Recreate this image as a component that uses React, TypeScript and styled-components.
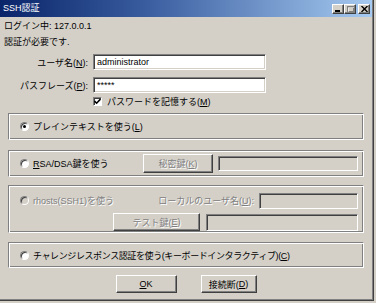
import styled, { createGlobalStyle } from 'styled-components'

const GlobalStyle = createGlobalStyle`
  html, body {
    margin: 0;
    padding: 0;
    background: #d4d0c8;
  }
  body {
    font-family: "Liberation Sans", "Noto Sans CJK JP", sans-serif;
    font-size: 9px;
    color: #000;
  }
  u {
    text-underline-offset: 1px;
  }
`

const Window = styled.div`
  width: 374px;
  height: 301px;
  box-sizing: border-box;
  background: #d4d0c8;
  border-right: 1px solid #404040;
  border-bottom: 1px solid #404040;
  box-shadow: inset -1px -1px 0 #808080;
  display: flex;
  flex-direction: column;
`

const TitleBar = styled.div`
  height: 17px;
  flex: none;
  display: flex;
  align-items: center;
  padding: 0 2px 0 3px;
  margin-right: 1px;
  background: linear-gradient(90deg, #0a246a 0%, #3a5ea0 40%, #a6caf0 100%);
  color: #fff;
`

const Title = styled.span`
  flex: 1;
  font-size: 9px;
  line-height: 17px;
`

const CaptionButtons = styled.div`
  display: flex;
  align-items: center;
`

const CaptionButton = styled.div<{ $gap?: number }>`
  width: 12px;
  height: 10px;
  margin-left: ${({ $gap }) => $gap ?? 0}px;
  box-sizing: border-box;
  background: #d4d0c8;
  border: 1px solid;
  border-color: #fff #404040 #404040 #fff;
  box-shadow: inset -1px -1px 0 #808080;
  display: flex;
  align-items: center;
  justify-content: center;
`

const Body = styled.div`
  padding-top: 3px;
  display: flex;
  flex-direction: column;
`

const InfoLine = styled.div<{ $top?: number }>`
  margin: ${({ $top }) => $top ?? 0}px 0 0 4px;
  height: 12px;
  line-height: 12px;
`

const FieldRow = styled.div<{ $top: number }>`
  display: flex;
  align-items: center;
  gap: 5px;
  height: 16px;
  margin-top: ${({ $top }) => $top}px;
`

const RowLabel = styled.div`
  width: 88px;
  text-align: right;
  white-space: nowrap;
`

const Field = styled.div<{ $width?: number; $height?: number; $disabled?: boolean }>`
  ${({ $width }) => ($width ? `width: ${$width}px;` : 'flex: 1;')}
  height: ${({ $height }) => $height ?? 16}px;
  box-sizing: border-box;
  background: ${({ $disabled }) => ($disabled ? '#d4d0c8' : '#fff')};
  border: 1px solid;
  border-color: #808080 #fff #fff #808080;
  box-shadow: inset 1px 1px 0 #404040, inset -1px -1px 0 #d4d0c8;
  padding: 0 3px;
  display: flex;
  align-items: center;
  white-space: nowrap;
  overflow: hidden;
`

const CheckRow = styled.div`
  display: flex;
  align-items: center;
  gap: 5px;
  height: 12px;
  margin-top: 2px;
  padding-left: 93px;
`

const CheckBox = styled.div`
  width: 9px;
  height: 9px;
  box-sizing: border-box;
  background: #fff;
  border: 1px solid;
  border-color: #808080 #fff #fff #808080;
  box-shadow: inset 1px 1px 0 #404040;
  display: flex;
  align-items: center;
  justify-content: center;
`

const Group = styled.div<{ $top: number; $height: number; $column?: boolean }>`
  margin: ${({ $top }) => $top}px 0 0 8px;
  width: 356px;
  height: ${({ $height }) => $height}px;
  box-sizing: border-box;
  border-top: 1px solid #808080;
  border-left: 1px solid #808080;
  border-right: 1px solid #fff;
  border-bottom: 1px solid #fff;
  box-shadow: inset 1px 1px 0 #fff, inset -1px -1px 0 #808080;
  padding: ${({ $column }) => ($column ? '6px 5px 0 11px' : '0 5px 0 11px')};
  display: flex;
  flex-direction: ${({ $column }) => ($column ? 'column' : 'row')};
  align-items: ${({ $column }) => ($column ? 'stretch' : 'center')};
`

const GroupRow = styled.div<{ $height: number; $top?: number }>`
  display: flex;
  align-items: center;
  height: ${({ $height }) => $height}px;
  margin-top: ${({ $top }) => $top ?? 0}px;
`

const RadioLabel = styled.div<{ $width?: number; $disabled?: boolean; $tight?: boolean }>`
  display: flex;
  align-items: center;
  gap: 4px;
  white-space: nowrap;
  ${({ $width }) => ($width ? `width: ${$width}px; flex: none;` : 'flex: 1;')}
  color: ${({ $disabled }) => ($disabled ? '#808080' : '#000')};
  text-shadow: ${({ $disabled }) => ($disabled ? '1px 1px 0 #fff' : 'none')};
  letter-spacing: ${({ $tight }) => ($tight ? '-0.4px' : 'normal')};
`

const Radio = styled.div<{ $checked?: boolean; $disabled?: boolean }>`
  width: 9px;
  height: 9px;
  flex: none;
  box-sizing: border-box;
  border-radius: 50%;
  background: ${({ $disabled }) => ($disabled ? '#d4d0c8' : '#fff')};
  border: 1px solid;
  border-color: #808080 #fff #fff #808080;
  box-shadow: inset 1px 1px 0 #404040;
  display: flex;
  align-items: center;
  justify-content: center;

  &::after {
    content: '';
    display: ${({ $checked }) => ($checked ? 'block' : 'none')};
    width: 3px;
    height: 3px;
    border-radius: 50%;
    background: #000;
  }
`

const DimText = styled.span`
  color: #808080;
  text-shadow: 1px 1px 0 #fff;
  white-space: nowrap;
`

const Button = styled.div<{ $width: number; $height?: number; $disabled?: boolean; $left?: number }>`
  width: ${({ $width }) => $width}px;
  height: ${({ $height }) => $height ?? 18}px;
  flex: none;
  margin-left: ${({ $left }) => $left ?? 0}px;
  box-sizing: border-box;
  background: #d4d0c8;
  border: 1px solid;
  border-color: #fff #404040 #404040 #fff;
  box-shadow: inset -1px -1px 0 #808080;
  display: flex;
  align-items: center;
  justify-content: center;
  white-space: nowrap;
  color: ${({ $disabled }) => ($disabled ? '#808080' : '#000')};
  text-shadow: ${({ $disabled }) => ($disabled ? '1px 1px 0 #fff' : 'none')};
`

const ButtonRow = styled.div`
  display: flex;
  justify-content: center;
  gap: 24px;
  margin-top: 7px;
  padding-right: 1px;
`

export default function App() {
  return (
    <>
      <GlobalStyle />
      <Window>
        <TitleBar>
          <Title>SSH認証</Title>
          <CaptionButtons>
            <CaptionButton>
              <svg width="6" height="6" viewBox="0 0 6 6">
                <rect x="0" y="4" width="5" height="2" fill="#000" />
              </svg>
            </CaptionButton>
            <CaptionButton>
              <svg width="7" height="6" viewBox="0 0 7 6">
                <rect x="0.5" y="0.5" width="6" height="5" fill="none" stroke="#808080" />
                <rect x="0" y="0" width="7" height="2" fill="#808080" />
                <rect x="1.5" y="1.5" width="6" height="5" fill="none" stroke="#fff" opacity="0.6" />
              </svg>
            </CaptionButton>
            <CaptionButton $gap={2}>
              <svg width="7" height="6" viewBox="0 0 7 6">
                <path d="M0.5 0 L6.5 6 M6.5 0 L0.5 6" stroke="#000" strokeWidth="1.4" />
              </svg>
            </CaptionButton>
          </CaptionButtons>
        </TitleBar>
        <Body>
          <InfoLine>ログイン中: 127.0.0.1</InfoLine>
          <InfoLine $top={4}>認証が必要です.</InfoLine>

          <FieldRow $top={6}>
            <RowLabel>ユーザ名(<u>N</u>):</RowLabel>
            <Field $width={173}>administrator</Field>
          </FieldRow>
          <FieldRow $top={7}>
            <RowLabel>パスフレーズ(<u>P</u>):</RowLabel>
            <Field $width={173}>*****</Field>
          </FieldRow>
          <CheckRow>
            <CheckBox>
              <svg width="7" height="7" viewBox="0 0 7 7">
                <path d="M0.5 3 L2.6 5.2 L6.5 1" fill="none" stroke="#000" strokeWidth="1.6" />
              </svg>
            </CheckBox>
            <span>パスワードを記憶する(<u>M</u>)</span>
          </CheckRow>

          <Group $top={6} $height={27}>
            <RadioLabel>
              <Radio $checked />
              <span>プレインテキストを使う(<u>L</u>)</span>
            </RadioLabel>
          </Group>

          <Group $top={10} $height={27}>
            <RadioLabel $width={123}>
              <Radio />
              <span><u>R</u>SA/DSA鍵を使う</span>
            </RadioLabel>
            <Button $width={70} $height={19} $disabled>
              秘密鍵(<u>K</u>)
            </Button>
            <Field $height={15} $disabled style={{ marginLeft: 5 }} />
          </Group>

          <Group $top={8} $height={48} $column>
            <GroupRow $height={17}>
              <RadioLabel $disabled>
                <Radio $disabled />
                <span>rhosts(SSH1)を使う</span>
              </RadioLabel>
              <DimText>
                ローカルのユーザ名(<u>U</u>):
              </DimText>
              <Field $width={99} $height={16} $disabled style={{ marginLeft: 5 }} />
            </GroupRow>
            <GroupRow $height={18} $top={4}>
              <Button $width={87} $left={93} $disabled>
                テスト鍵(<u>E</u>)
              </Button>
              <Field $height={17} $disabled style={{ marginLeft: 6 }} />
            </GroupRow>
          </Group>

          <Group $top={9} $height={26}>
            <RadioLabel $tight>
              <Radio />
              <span>チャレンジレスポンス認証を使う(キーボードインタラクティブ)(<u>C</u>)</span>
            </RadioLabel>
          </Group>

          <ButtonRow>
            <Button $width={61}>
              <u>O</u>K
            </Button>
            <Button $width={56}>
              接続断(<u>D</u>)
            </Button>
          </ButtonRow>
        </Body>
      </Window>
    </>
  )
}
